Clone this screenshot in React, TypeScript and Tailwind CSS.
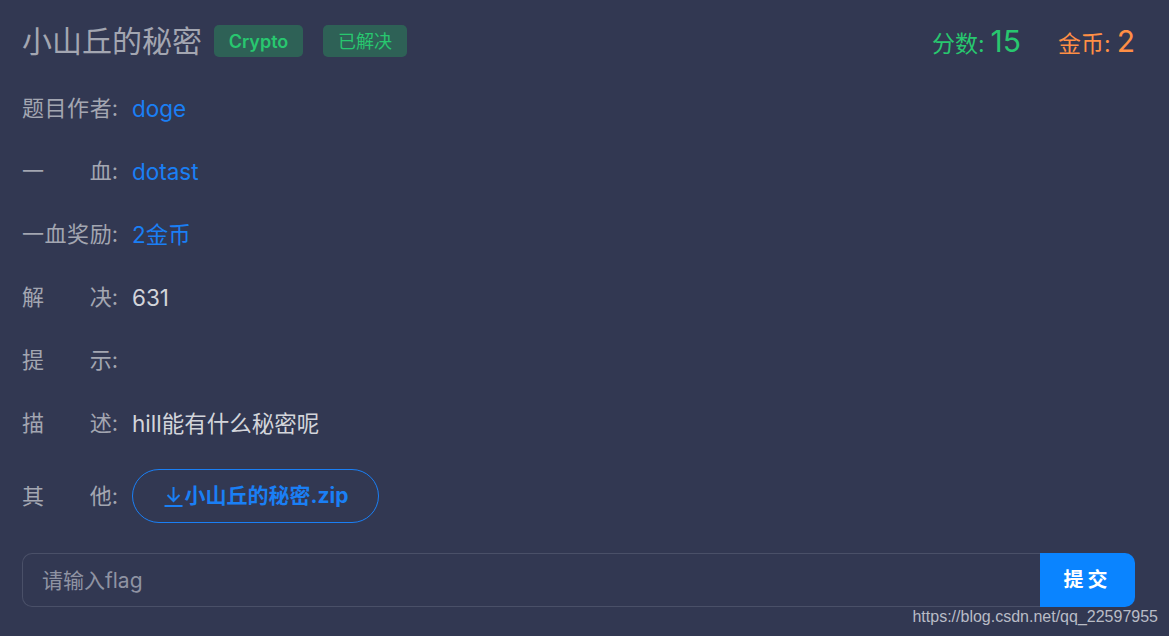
const font = "font-['Inter','Noto_Sans_CJK_SC',sans-serif]";

const rows: { label: string[]; value?: string; tone?: 'link' | 'text' }[] = [
  { label: ['题', '目', '作', '者'], value: 'doge', tone: 'link' },
  { label: ['一', '血'], value: 'dotast', tone: 'link' },
  { label: ['一', '血', '奖', '励'], value: '2金币', tone: 'link' },
  { label: ['解', '决'], value: '631', tone: 'text' },
  { label: ['提', '示'] },
  { label: ['描', '述'], value: 'hill能有什么秘密呢', tone: 'text' },
];

function Label({ chars }: { chars: string[] }) {
  return (
    <div className="w-[96px] flex justify-between text-[22px] text-[#a3a6b1]">
      {chars.map((c, i) => (
        <span key={i}>{i === chars.length - 1 ? c + ':' : c}</span>
      ))}
    </div>
  );
}

export default function App() {
  return (
    <div className={`relative w-[1169px] h-[636px] overflow-hidden bg-[#323852] ${font}`}>
      <div className="pl-[22px] pr-[34px] pt-[22px]">
        {/* header */}
        <div className="h-[38px] flex items-center">
          <h1 className="text-[30px] leading-none text-[#a3a6b1]">小山丘的秘密</h1>
          <span className="ml-[12px] h-[32px] w-[89px] flex items-center justify-center rounded-[5px] bg-[#2e6156] text-[#28c76f] text-[18px] font-semibold">
            Crypto
          </span>
          <span className="ml-[20px] h-[32px] w-[84px] flex items-center justify-center rounded-[5px] bg-[#2e6156] text-[#28c76f] text-[18px]">
            已解决
          </span>
          <div className="ml-auto flex items-baseline text-[#28c76f]">
            <span className="text-[23px]">分数:</span>
            <span className="ml-[6px] text-[30px]">15</span>
          </div>
          <div className="ml-[37px] flex items-baseline text-[#ff8f45]">
            <span className="text-[23px]">金币:</span>
            <span className="ml-[6px] text-[30px]">2</span>
          </div>
        </div>

        {/* info */}
        <div className="mt-[17px]">
          {rows.map((r, i) => (
            <div key={i} className="h-[63px] flex items-center">
              <Label chars={r.label} />
              {r.value && (
                <span
                  className={`ml-[14px] text-[22.5px] ${r.tone === 'link' ? 'text-[#1a7ff5]' : 'text-[#d3d5db]'}`}
                >
                  {r.value}
                </span>
              )}
            </div>
          ))}
          <div className="pt-[14px] flex items-center">
            <Label chars={['其', '他']} />
            <button className="ml-[14px] h-[54px] w-[247px] flex items-center justify-center rounded-full border border-[#1a7ff5] text-[#1a7ff5] text-[21px] font-bold">
              <svg width="21" height="22" viewBox="0 0 20 22" fill="none" stroke="#1a7ff5" strokeWidth="2" className="mr-[1px]">
                <path d="M10 2v14M4 10l6 6 6-6M1 21h18" />
              </svg>
              小山丘的秘密.zip
            </button>
          </div>
        </div>

        {/* flag */}
        <div className="mt-[30px] flex h-[54px]">
          <input
            placeholder="请输入flag"
            className="flex-1 h-full rounded-l-[10px] border border-r-0 border-[#4a5068] bg-transparent px-[19px] text-[21px] text-[#d3d5db] placeholder:text-[#8f93a3] outline-none"
          />
          <button className="w-[95px] h-full rounded-r-[10px] bg-[#0a84ff] text-white text-[20px] font-bold tracking-[4px]">
            提交
          </button>
        </div>
      </div>

      <div className="absolute right-[11px] top-[605px] text-[16px] text-[#b9bcc6] font-['Liberation_Sans',sans-serif]">
        https://blog.csdn.net/qq_22597955
      </div>
    </div>
  );
}
